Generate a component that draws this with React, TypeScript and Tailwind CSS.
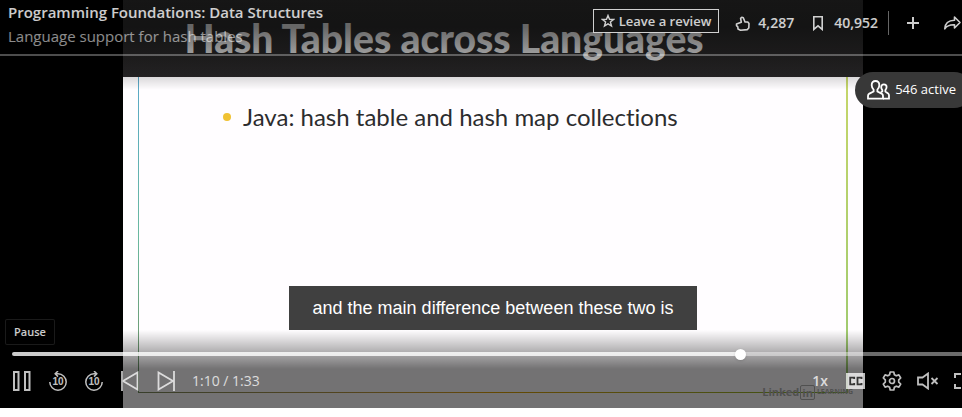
import React, { useState } from "react";

const UI_FONT = "font-['Segoe_UI','Open_Sans','Noto_Sans',sans-serif]";

function Slide() {
  return (
    <section className="col-start-1 row-start-1 flex w-full max-w-[740px] flex-col justify-self-center bg-[#fffdff] font-['Lato','Open_Sans',sans-serif]">
      <div className="flex h-[77px] items-center justify-center bg-linear-to-b from-[#363636] to-[#292728]">
        <h1 className="ml-[-98px] whitespace-nowrap text-[39px] font-black leading-[77px] text-white">
          Hash Tables across Languages
        </h1>
      </div>
      <div className="mb-[15px] flex flex-1 px-[15px]">
        <div className="w-px bg-linear-to-b from-[#5aa8c8] via-[#6ab8a0] to-[#6e8f60]" />
        <div className="flex flex-1 flex-col">
          <ul className="flex-1 pl-[84px] pt-6">
            <li className="flex items-center gap-3 whitespace-nowrap text-2xl leading-8 text-[#2c2c2e] [font-variant-ligatures:none]">
              <span className="size-2 rounded-full bg-[#f0c233]" />
              Java: hash table and hash map collections
            </li>
          </ul>
          <div className="h-px bg-linear-to-r from-[#7d8a60] via-[#e0a000] to-[#80b830]" />
        </div>
        <div className="w-[2px] bg-linear-to-b from-[#c6d66a] to-[#98c870]" />
      </div>
    </section>
  );
}

function Watermark() {
  return (
    <div className="col-start-1 row-start-1 mb-2 flex w-full max-w-[740px] items-center justify-end gap-px self-end justify-self-center pr-[10px] font-['Open_Sans',sans-serif] text-[#505050]">
      <span className="text-[11px] font-bold leading-4">Linked</span>
      <span className="rounded-xs border border-[#505050] px-px text-[11px] font-bold leading-[13px]">in</span>
      <span className="pl-px text-[7px] font-bold leading-4">LEARNING</span>
    </div>
  );
}

function Header() {
  return (
    <header className="flex h-14 justify-between border-b-2 border-white/30">
      <div className="pl-2 whitespace-nowrap">
        <p className="text-[15px] font-semibold leading-6 text-white/80">
          Programming Foundations: Data Structures
        </p>
        <p className="text-[15px] leading-6 text-white/55">Language support for hash tables</p>
      </div>
      <div className="flex items-start pt-[9px] pr-[21px] text-sm font-semibold text-white/80">
        <button className="flex h-6 items-center gap-1 border border-white/80 bg-[#161616]/80 px-[7px] text-[13px] whitespace-nowrap">
          <svg className="size-[14px]" viewBox="0 0 14 14" fill="none" stroke="currentColor" strokeWidth="1.4">
            <path d="M7 1.5 8.5 5.3l4 .2-3.1 2.5 1.1 4L7 9.8 3.5 12l1.1-4L1.5 5.5l4-.2z" />
          </svg>
          Leave a review
        </button>
        <button className="ml-4 flex h-7 items-center gap-2">
          <svg className="size-[15px]" viewBox="0 0 15 15" fill="none" stroke="currentColor" strokeWidth="1.6">
            <path d="M1.500 8 6.300 6.200 5.600 2.400 6.800 1.200 8.300 1.700 10 6h2.800l1.200 1.500-.2 4.500-1.600 1.600-6.700.6L3 13l-.2-2.200L1.500 9.600z" strokeLinejoin="round" />
          </svg>
          4,287
        </button>
        <button className="ml-4 flex h-7 items-center gap-2">
          <svg className="h-[15px] w-4" viewBox="0 0 16 15" fill="none" stroke="currentColor" strokeWidth="1.6">
            <path d="M3.800.8h8.400v12.600L8 9.800l-4.200 3.600z" />
          </svg>
          40,952
        </button>
        <span className="ml-[10px] mt-[2px] h-6 w-px bg-white/40" />
        <button aria-label="Save" className="ml-3 flex h-7 w-6 items-center justify-center">
          <svg className="size-3" viewBox="0 0 12 12" stroke="currentColor" strokeWidth="2">
            <path d="M6 0v12M0 6h12" />
          </svg>
        </button>
        <button aria-label="Share" className="ml-4 flex h-7 w-6 items-center justify-center">
          <svg className="h-[14px] w-5" viewBox="0 0 20 14" fill="none" stroke="currentColor" strokeWidth="1.6">
            <path d="M11.500 1 17 6.500 11.500 12V8.700C6 8.500 3.500 10 1.800 12.800 2 7.500 5 4.500 11.500 4.300z" strokeLinejoin="round" />
          </svg>
        </button>
      </div>
    </header>
  );
}

function ActivePill() {
  return (
    <button className="mt-4 mr-[14px] flex h-9 items-center gap-[5px] self-end rounded-full bg-[#383838] pr-4 pl-3 text-[13px] whitespace-nowrap text-white">
      <svg className="h-5 w-[23px]" viewBox="0 0 23 20" fill="none" stroke="currentColor" strokeWidth="1.8">
        <path d="M8.500 1C6 1 4.600 2.700 4.700 5.200c.1 2.100.8 3.500 1.900 4.400v1.900L2.400 13.600C1.400 14.200 1 15 1 16v2.600h15V16c0-1-.4-1.800-1.400-2.400l-4.200-2.100V9.600c1.100-.9 1.800-2.300 1.900-4.400C12.400 2.700 11 1 8.500 1z" />
        <path d="M13.800 12.300 15.300 11.500V10c-.8-.9-1.100-1.700-1.100-2.900 0-1.700 1-2.800 2.700-2.800s2.700 1.100 2.700 2.800c0 1.200-.4 2-1.200 2.900v1.500l2.700 1.900c.6.500.9 1 .9 1.800v3.400h-6" />
      </svg>
      546 active
    </button>
  );
}

function IconButton({ label, children }: { label: string; children: React.ReactNode }) {
  return (
    <button aria-label={label} className="flex size-9 shrink-0 items-center justify-center">
      {children}
    </button>
  );
}

function TenSeconds({ forward }: { forward?: boolean }) {
  return (
    <svg className="size-5" viewBox="0 0 20 20" fill="none" stroke="currentColor" strokeWidth="1.5">
      {forward ? (
        <path d="M18.200 11a8.200 8.200 0 1 1-8.200-8.200h2M10 0l2.800 2.800L10 5.600" />
      ) : (
        <path d="M1.800 11A8.200 8.200 0 1 0 10 2.800H8M10 0 7.200 2.800 10 5.600" />
      )}
      <text
        x="10"
        y="14"
        textAnchor="middle"
        stroke="none"
        fill="currentColor"
        className="font-['Liberation_Sans_Narrow','Liberation_Sans',sans-serif] text-[10px] font-bold"
      >
        10
      </text>
    </svg>
  );
}

function Controls() {
  const [seconds, setSeconds] = useState(70.75);
  const played = (seconds / 93) * 100;
  return (
    <div className="mt-auto flex flex-col pb-[9px] text-white">
      <span
        role="tooltip"
        className="mb-[7px] ml-[5px] self-start rounded-xs border border-white/10 bg-black px-2 text-[11px] font-semibold leading-6 text-white/80"
      >
        Pause
      </span>
      <div className="flex flex-col">
        <input
          type="range"
          aria-label="Seek"
          min={0}
          max={93}
          step={0.25}
          value={seconds}
          onChange={(e) => setSeconds(Number(e.target.value))}
          style={{
            background: `linear-gradient(to right, rgba(255,255,255,.8) ${played}%, rgba(255,255,255,.42) ${played}%)`,
          }}
          className="mx-3 h-1 appearance-none rounded-full [&::-webkit-slider-thumb]:size-[11px] [&::-webkit-slider-thumb]:appearance-none [&::-webkit-slider-thumb]:rounded-full [&::-webkit-slider-thumb]:bg-white [&::-webkit-slider-thumb]:shadow"
        />
        <div className="mt-[7px] flex items-center px-1 opacity-75">
          <IconButton label="Pause">
            <svg className="size-5" viewBox="0 0 20 20" fill="none" stroke="currentColor" strokeWidth="2">
              <path d="M2 1h4.500v18H2zM13 1h4.500v18H13z" />
            </svg>
          </IconButton>
          <IconButton label="Back 10 seconds">
            <TenSeconds />
          </IconButton>
          <IconButton label="Forward 10 seconds">
            <TenSeconds forward />
          </IconButton>
          <IconButton label="Previous video">
            <svg className="size-5" viewBox="0 0 20 20" fill="none" stroke="currentColor" strokeWidth="1.8">
              <path d="M2 0v20M17.500 1.500v17L3 10z" />
            </svg>
          </IconButton>
          <IconButton label="Next video">
            <svg className="size-5" viewBox="0 0 20 20" fill="none" stroke="currentColor" strokeWidth="1.800">
              <path d="M18 0v20M2.500 1.500v17L17 10z" />
            </svg>
          </IconButton>
          <span className="ml-2 flex-1 text-sm">1:10 / 1:33</span>
          <button className="size-9 text-sm font-semibold">1x</button>
          <IconButton label="Captions">
            <svg className="h-4 w-5" viewBox="0 0 20 16">
              <path d="M0 0h19v16H0z" fill="currentColor" />
              <path
                d="M8.200 6V4.700h-4v6.600h4V10M15.500 6V4.700h-4v6.600h4V10"
                fill="none"
                stroke="#222"
                strokeWidth="1.800"
              />
            </svg>
          </IconButton>
          <IconButton label="Settings">
            <svg className="size-5" viewBox="0 0 20 20" fill="none" stroke="currentColor" strokeWidth="1.700">
              <path
                d="M8.200 1h3.600l.6 2.700 1.900 1.100 2.600-.9 1.800 3.100-2 1.900v2.200l2 1.900-1.800 3.100-2.600-.9-1.900 1.100-.6 2.700H8.200l-.6-2.700-1.900-1.100-2.600.9L1.300 13l2-1.900V8.900l-2-1.900 1.800-3.100 2.600.9 1.900-1.100z"
                strokeLinejoin="round"
              />
              <circle cx="10" cy="10" r="2.500" />
            </svg>
          </IconButton>
          <IconButton label="Unmute">
            <svg className="h-[18px] w-[22px]" viewBox="0 0 22 18" fill="none" stroke="currentColor" strokeWidth="1.800">
              <path d="M1 5.500h4.500l5.500-4v15l-5.500-4H1zM14.500 6l6 6M20.500 6l-6 6" />
            </svg>
          </IconButton>
          <IconButton label="Full screen">
            <svg className="h-4 w-5" viewBox="0 0 20 16" fill="none" stroke="currentColor" strokeWidth="2">
              <path d="M1 5V1h6M13 1h6v4M19 11v4h-6M7 15H1v-4" />
            </svg>
          </IconButton>
        </div>
      </div>
    </div>
  );
}

export default function App() {
  return (
    <main className="overflow-hidden bg-white">
      <div className={`grid min-h-[408px] w-[calc(100%+24px)] grid-cols-1 bg-black ${UI_FONT}`}>
        <Slide />
        <div className="col-start-1 row-start-1 h-[90px] bg-linear-to-b from-black/60 from-30% via-black/35 via-65% to-transparent" />
        <div className="col-start-1 row-start-1 h-[78px] self-end bg-linear-to-b from-transparent to-black/55 to-50%" />
        <Watermark />
        <p className="col-start-1 row-start-1 mb-[78px] self-end justify-self-center bg-[#404040] px-6 font-['Liberation_Sans',Arial,sans-serif] text-lg leading-[44px] whitespace-nowrap text-white">
          and the main difference between these two is
        </p>
        <div className="col-start-1 row-start-1 flex flex-col">
          <Header />
          <ActivePill />
          <Controls />
        </div>
      </div>
    </main>
  );
}
